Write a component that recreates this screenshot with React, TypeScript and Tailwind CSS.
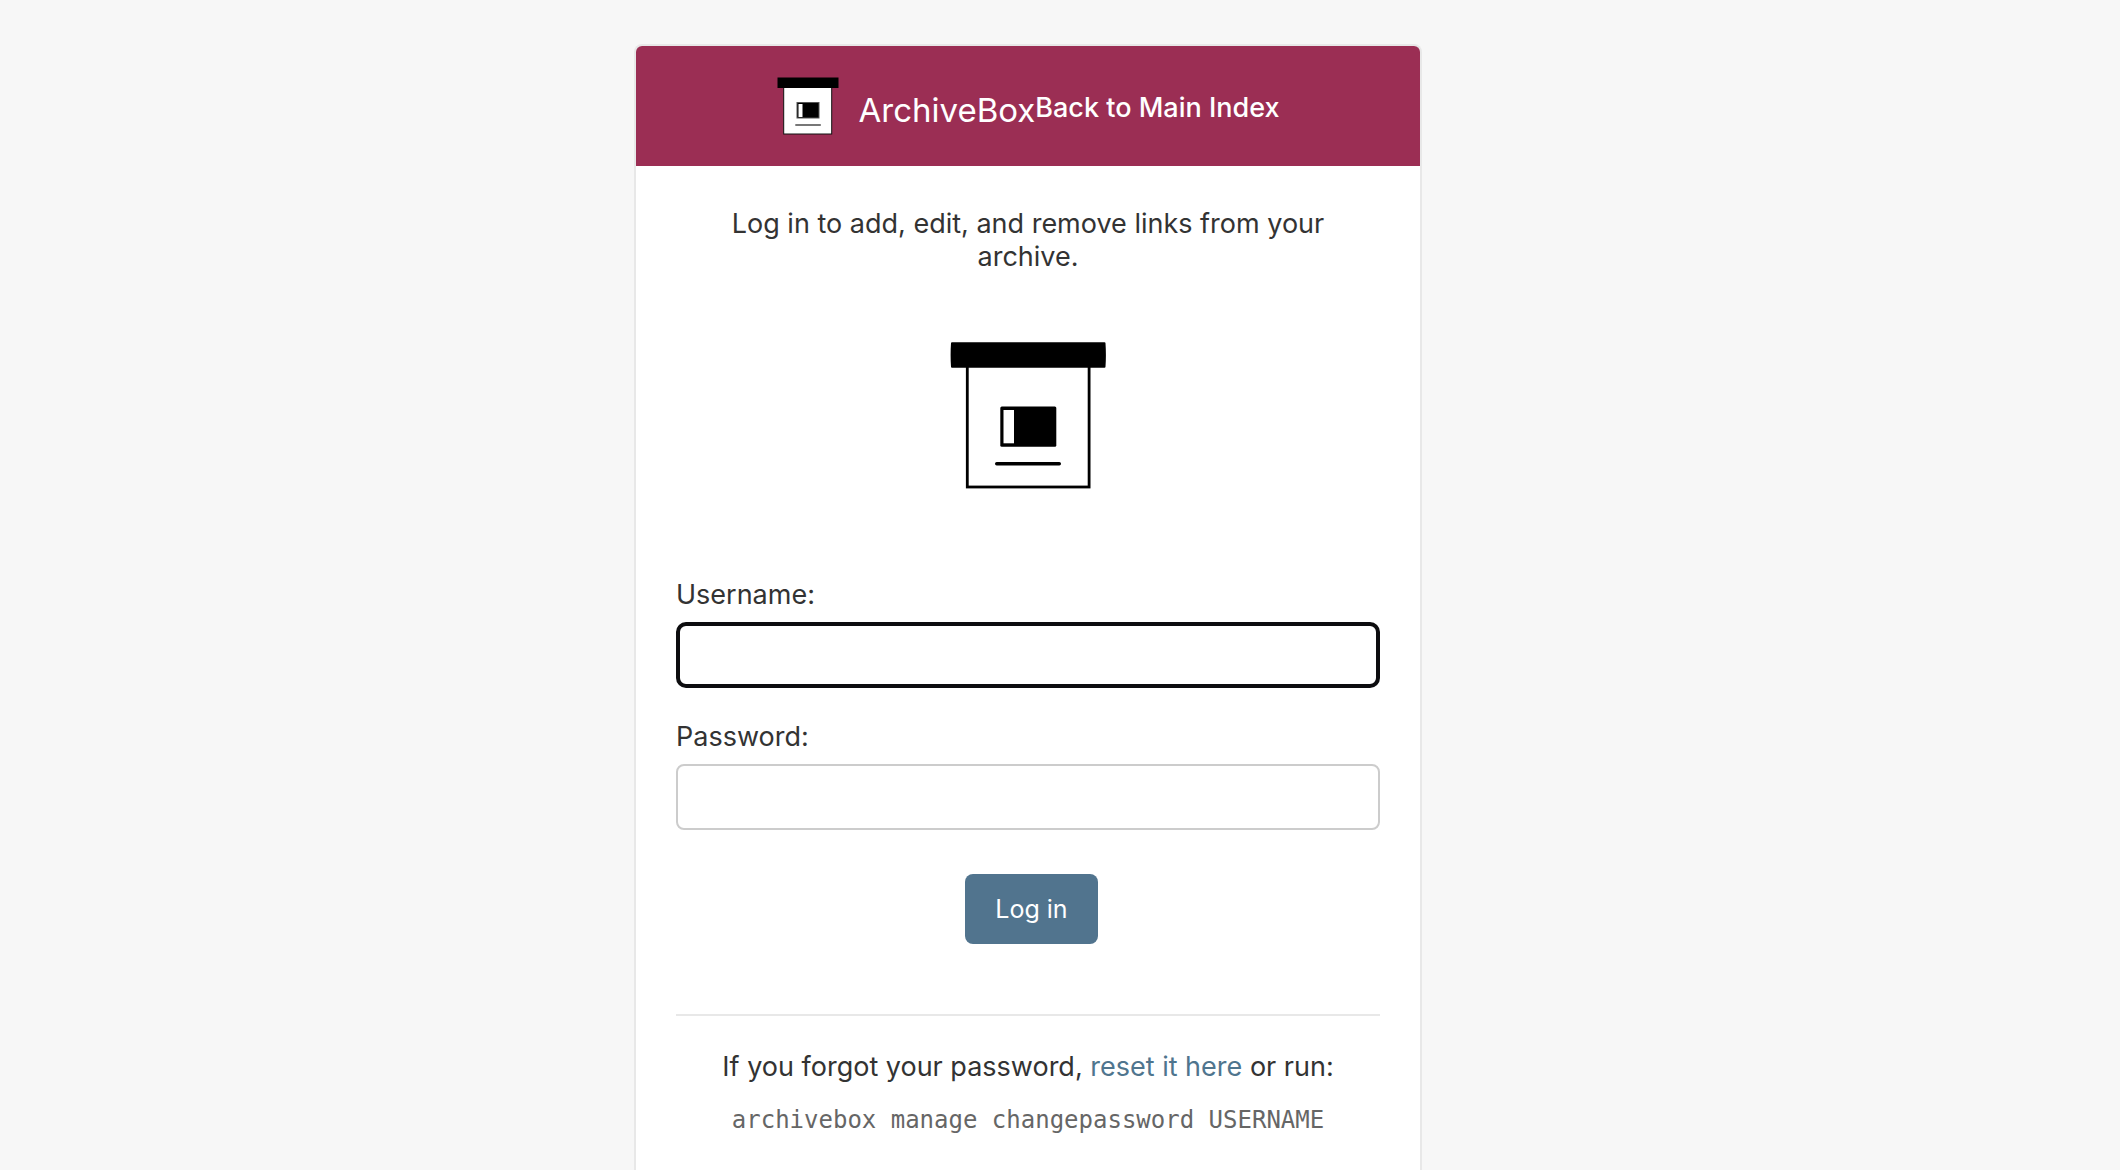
import React, { useState } from 'react';

const HeaderLogo = () => (
  <svg className="h-15 w-[62px] shrink-0" viewBox="0 0 62 60" aria-hidden="true">
    <rect x="6.7" y="8" width="48" height="49" fill="#fff" stroke="#111" strokeWidth="1" />
    <rect x="0.5" y="0.5" width="61" height="10.5" fill="#000" />
    <rect x="20" y="25.5" width="22" height="15.5" fill="#000" stroke="#555" strokeWidth="1" />
    <rect x="21.5" y="27" width="4" height="13" fill="#fff" />
    <rect x="18.3" y="47" width="25.5" height="2" fill="#777" />
  </svg>
);

const BoxLogo = () => (
  <svg className="h-[150px] w-[156px]" viewBox="0 0 156 150" aria-hidden="true">
    <rect x="17.3" y="20" width="121.8" height="125" fill="#fff" stroke="#000" strokeWidth="2.8" />
    <path d="M2 0.3h152.500q1 0 1 1q0.800 12 0 23.500q0 1-1 1H2q-1 0-1-1q-0.800-12 0-23.500q0-1 1-1z" fill="#000" />
    <rect x="50.300" y="64.500" width="56" height="40.300" rx="1.500" fill="#000" />
    <rect x="53.500" y="68" width="10.500" height="33.300" fill="#fff" />
    <rect x="45" y="120" width="66" height="3.400" rx="1.700" fill="#000" />
  </svg>
);

const App = () => {
  const [username, setUsername] = useState('');
  const [password, setPassword] = useState('');

  return (
    <div className="flex min-h-screen flex-col bg-[#f7f7f7] pt-11 pr-16 font-['Inter',sans-serif] text-[27px] leading-[33px] text-[#333]">
      <div className="mx-auto flex w-full max-w-[788px] flex-1 flex-col rounded-t-lg border-2 border-b-0 border-[#e8e8e8] bg-white">
        <header className="flex h-[120px] items-center justify-center rounded-t-md bg-[#9b2e54] pt-0.5 text-white">
          <a href="#" className="flex items-center gap-5 text-[33px] leading-10">
            <HeaderLogo />
            <span className="pt-1.5">ArchiveBox</span>
          </a>
          <a href="#" className="font-medium">Back to Main Index</a>
        </header>

        <main className="px-10 pt-[41px]">
          <p className="px-10 text-center">
            Log in to add, edit, and remove links from your archive.
          </p>

          <div className="flex justify-center pt-[69px] pb-[86px]">
            <BoxLogo />
          </div>

          <form onSubmit={(e) => e.preventDefault()}>
            <label htmlFor="username" className="block">Username:</label>
            <input
              id="username"
              type="text"
              value={username}
              onChange={(e) => setUsername(e.target.value)}
              className="mt-[11px] block h-[66px] w-full rounded-[10px] border-4 border-[#0d0d0f] bg-white px-3 outline-none"
            />

            <label htmlFor="password" className="mt-8 block">Password:</label>
            <input
              id="password"
              type="password"
              value={password}
              onChange={(e) => setPassword(e.target.value)}
              className="mt-[11px] block h-[66px] w-full rounded-lg border-2 border-[#ccc] bg-white px-3 outline-none"
            />

            <div className="flex justify-center pt-11 pl-[7px]">
              <button type="submit" className="h-[70px] rounded-lg bg-[#51748e] px-[30px] text-[25px] text-white">
                Log in
              </button>
            </div>
          </form>

          <div className="mt-[70px] border-t-2 border-[#e8e8e8] pt-[34px] pb-10 text-center">
            <p>
              If you forgot your password, <a href="#" className="text-[#4f758e]">reset it here</a> or run:
            </p>
            <code className="mt-[21px] block font-['DejaVu_Sans_Mono',monospace] text-2xl leading-[33px] text-[#666]">
              archivebox manage changepassword USERNAME
            </code>
          </div>
        </main>
      </div>
    </div>
  );
};

export default App;
